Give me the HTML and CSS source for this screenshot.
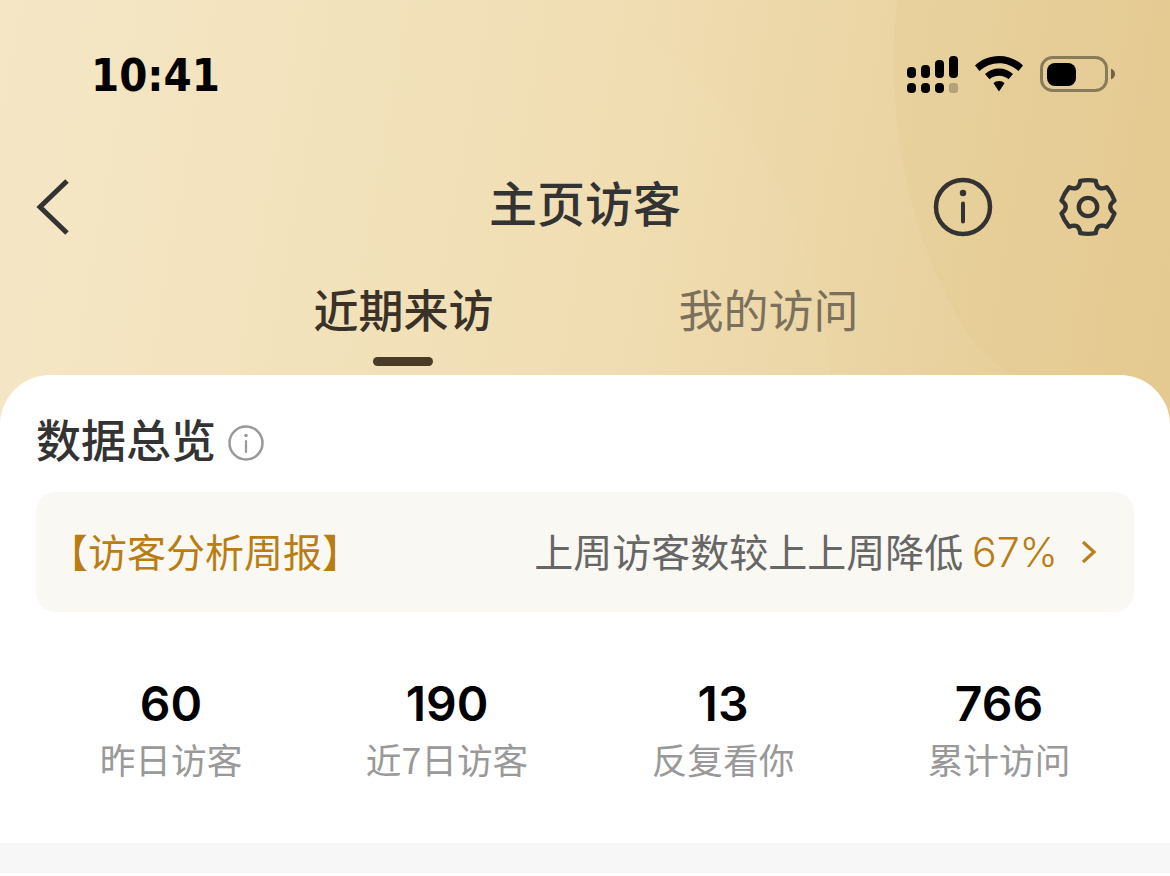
FILE: index.html
```html
<!DOCTYPE html>
<html lang="zh-CN">
<head>
    <meta charset="UTF-8">
    <meta name="viewport" content="width=device-width, initial-scale=1.0">
    <title>主页访客</title>
    <link rel="stylesheet" href="styles.css">
</head>
<body>
    <div class="page">
        <svg class="header-bg" width="1170" height="420" viewBox="0 0 1170 420">
            <path d="M0 0H590C720 70 830 200 832 420H0Z" fill="#f4e2bb" opacity="0.14"/>
            <path d="M897 0C885 110 905 240 975 345C1030 400 1110 420 1170 470V0Z" fill="#dfc084" opacity="0.16"/>
        </svg>

        <header class="header">
            <div class="status-bar">
                <span class="time">10:41</span>
                <div class="status-icons">
                    <svg class="signal" width="52" height="38" viewBox="0 0 52 38">
                        <rect x="0" y="11" width="9" height="11" rx="4"/>
                        <rect x="14" y="9" width="9" height="13" rx="4"/>
                        <rect x="28" y="4" width="9" height="18" rx="4"/>
                        <rect x="42" y="0" width="9" height="22" rx="4"/>
                        <rect x="0" y="27" width="9" height="10" rx="4"/>
                        <rect x="14" y="27" width="9" height="10" rx="4"/>
                        <rect x="28" y="27" width="9" height="10" rx="4"/>
                        <rect x="42" y="27" width="9" height="10" rx="3" opacity="0.22"/>
                    </svg>
                    <svg class="wifi" width="50" height="37" viewBox="0 0 50 37">
                        <path d="M25 1C15.500 1 7.500 4.500 1 10.500L5.500 16C11 11 17.500 8.200 25 8.200S39 11 44.500 16L49 10.500C42.500 4.500 34.500 1 25 1Z"/>
                        <path d="M25 13.500C19.500 13.500 14.800 15.500 11 19L15.500 24.300C18 22 21.200 20.800 25 20.800S32 22 34.500 24.300L39 19C35.200 15.500 30.500 13.500 25 13.500Z"/>
                        <path d="M25 26C22.800 26 20.900 26.800 19.500 28.200L25 36.500L30.500 28.200C29.100 26.800 27.200 26 25 26Z"/>
                    </svg>
                    <svg class="battery" width="76" height="37" viewBox="0 0 76 37">
                        <rect x="1.500" y="1.500" width="65" height="33" rx="11" fill="none" stroke="#8a7a5c" stroke-width="3"/>
                        <rect x="7" y="7" width="29" height="23" rx="8"/>
                        <path d="M71 12.500C73.500 13.500 75 15.500 75 18S73.500 22.500 71 23.500Z" fill="#6f6248"/>
                    </svg>
                </div>
            </div>

            <nav class="nav-bar">
                <svg class="back-icon" width="34" height="58" viewBox="0 0 34 58">
                    <polyline points="31,3 4,29 31,55" fill="none" stroke="#333" stroke-width="5"/>
                </svg>
                <h1 class="nav-title">主页访客</h1>
                <div class="nav-actions">
                    <svg width="60" height="60" viewBox="0 0 60 60">
                        <circle cx="30" cy="30" r="27" fill="none" stroke="#333" stroke-width="4.500"/>
                        <circle cx="30" cy="16" r="3.200" fill="#333"/>
                        <line x1="30" y1="26.500" x2="30" y2="44.500" stroke="#333" stroke-width="4" stroke-linecap="round"/>
                    </svg>
                    <svg width="60" height="60" viewBox="-31 -31 62 62">
                        <path d="M-8 -27Q0 -28.500 8 -27Q9.300 -16.100 19.400 -20.400Q24.700 -14.250 27.400 -6.600Q18.600 0 27.400 6.600Q24.700 14.250 19.400 20.400Q9.300 16.100 8 27Q0 28.500 -8 27Q-9.300 16.100 -19.400 20.400Q-24.700 14.250 -27.400 6.600Q-18.600 0 -27.400 -6.600Q-24.700 -14.250 -19.400 -20.400Q-9.300 -16.100 -8 -27Z" fill="none" stroke="#333" stroke-width="4.500" stroke-linejoin="round"/>
                        <circle cx="0" cy="0" r="9.500" fill="none" stroke="#333" stroke-width="4.500"/>
                    </svg>
                </div>
            </nav>

            <div class="tabs">
                <div class="tab tab-active">近期来访</div>
                <div class="tab">我的访问</div>
            </div>
        </header>

        <main class="card">
            <div class="section-head">
                <h2 class="section-title">数据总览</h2>
                <svg class="section-info" width="36" height="36" viewBox="0 0 36 36">
                    <circle cx="18" cy="18" r="16.500" fill="none" stroke="#999" stroke-width="2.500"/>
                    <circle cx="18" cy="10.500" r="1.800" fill="#999"/>
                    <line x1="18" y1="16" x2="18" y2="27" stroke="#999" stroke-width="2.200" stroke-linecap="round"/>
                </svg>
            </div>

            <div class="notice">
                <span class="notice-tag">【访客分析周报】</span>
                <span class="notice-text">上周访客数较上上周降低 <em class="notice-num">67%</em></span>
                <svg class="notice-arrow" width="18" height="26" viewBox="0 0 18 26">
                    <polyline points="3,3 14,13 3,23" fill="none" stroke="#b8801f" stroke-width="3.200"/>
                </svg>
            </div>

            <div class="stats">
                <div class="stat"><div class="stat-num">60</div><div class="stat-label">昨日访客</div></div>
                <div class="stat"><div class="stat-num">190</div><div class="stat-label">近7日访客</div></div>
                <div class="stat"><div class="stat-num">13</div><div class="stat-label">反复看你</div></div>
                <div class="stat"><div class="stat-num">766</div><div class="stat-label">累计访问</div></div>
            </div>
        </main>

        <div class="divider"></div>
    </div>
</body>
</html>
```

FILE: styles.css
```css
* {
    box-sizing: border-box;
}
html, body {
    margin: 0;
    padding: 0;
    background: #fff;
}
body {
    font-family: "Noto Sans CJK SC", "Noto Sans", sans-serif;
    overflow: hidden;
}
.page {
    position: relative;
    width: 1170px;
    height: 876px;
    overflow: hidden;
    background: linear-gradient(100deg, #f6e8c9 0%, #f1deb4 45%, #e8d09c 80%, #e4c98f 100%);
}
.header-bg {
    position: absolute;
    top: 0;
    left: 0;
}
.header {
    position: relative;
    height: 375px;
}
.status-bar {
    display: flex;
    justify-content: space-between;
    align-items: flex-start;
    height: 130px;
    padding: 56px 54px 0 91px;
}
.time {
    margin-top: 1px;
    font-family: "DejaVu Sans", sans-serif;
    font-size: 45px;
    font-weight: 700;
    font-stretch: condensed;
    line-height: 38px;
    color: #000;
}
.status-icons {
    display: flex;
    align-items: flex-start;
    gap: 16px;
}
.signal {
    margin-right: -1px;
}
.wifi {
    margin-top: -1px;
}
.nav-bar {
    display: flex;
    align-items: center;
    justify-content: space-between;
    height: 60px;
    padding: 0 52px 0 36px;
    margin-top: 47px;
    position: relative;
}
.nav-title {
    position: absolute;
    top: 0;
    left: 0;
    right: 0;
    margin: 0;
    text-align: center;
    font-size: 48px;
    font-weight: 500;
    line-height: 48px;
    color: #333;
}
.nav-actions {
    display: flex;
    gap: 65px;
}
.tabs {
    display: flex;
    justify-content: center;
    gap: 185px;
    margin-top: 37px;
    padding-left: 2px;
}
.tab {
    position: relative;
    font-size: 45px;
    line-height: 70px;
    color: #7b705c;
}
.tab-active {
    font-weight: 500;
    color: #3a3228;
}
.tab-active::after {
    content: "";
    position: absolute;
    left: 60px;
    top: 83px;
    width: 60px;
    height: 9px;
    border-radius: 5px;
    background: #4a3a28;
}
.card {
    position: relative;
    height: 501px;
    padding: 36px 36px 0;
    background: #fff;
    border-radius: 50px 50px 0 0;
}
.section-head {
    display: flex;
    align-items: center;
    gap: 12px;
    height: 60px;
}
.section-title {
    margin: 0;
    padding-bottom: 4px;
    font-size: 45px;
    font-weight: 500;
    line-height: 60px;
    color: #333;
}
.section-info {
    margin-top: 4px;
}
.notice {
    display: flex;
    align-items: center;
    height: 120px;
    margin-top: 21px;
    padding: 0 36px 0 13px;
    background: #faf8f3;
    border-radius: 20px;
    font-size: 39px;
}
.notice-tag {
    padding-bottom: 5px;
    color: #b87d13;
}
.notice-text {
    margin-left: auto;
    padding-bottom: 5px;
    color: #666;
}
.notice-num {
    font-family: Inter, sans-serif;
    font-size: 41px;
    font-style: normal;
    font-weight: 300;
    color: #b87d13;
}
.notice-arrow {
    margin-left: 22px;
}
.stats {
    display: grid;
    grid-template-columns: repeat(4, 276px);
    margin: 60px -3px 0;
}
.stat {
    text-align: center;
}
.stat-num {
    font-family: Inter, sans-serif;
    font-size: 48px;
    font-weight: 600;
    line-height: 64px;
    color: #000;
}
.stat-label {
    font-size: 35.700px;
    line-height: 46px;
    color: #999;
}
.divider {
    position: absolute;
    left: 0;
    right: 0;
    top: 843px;
    height: 30px;
    background: #f7f7f7;
}
```
